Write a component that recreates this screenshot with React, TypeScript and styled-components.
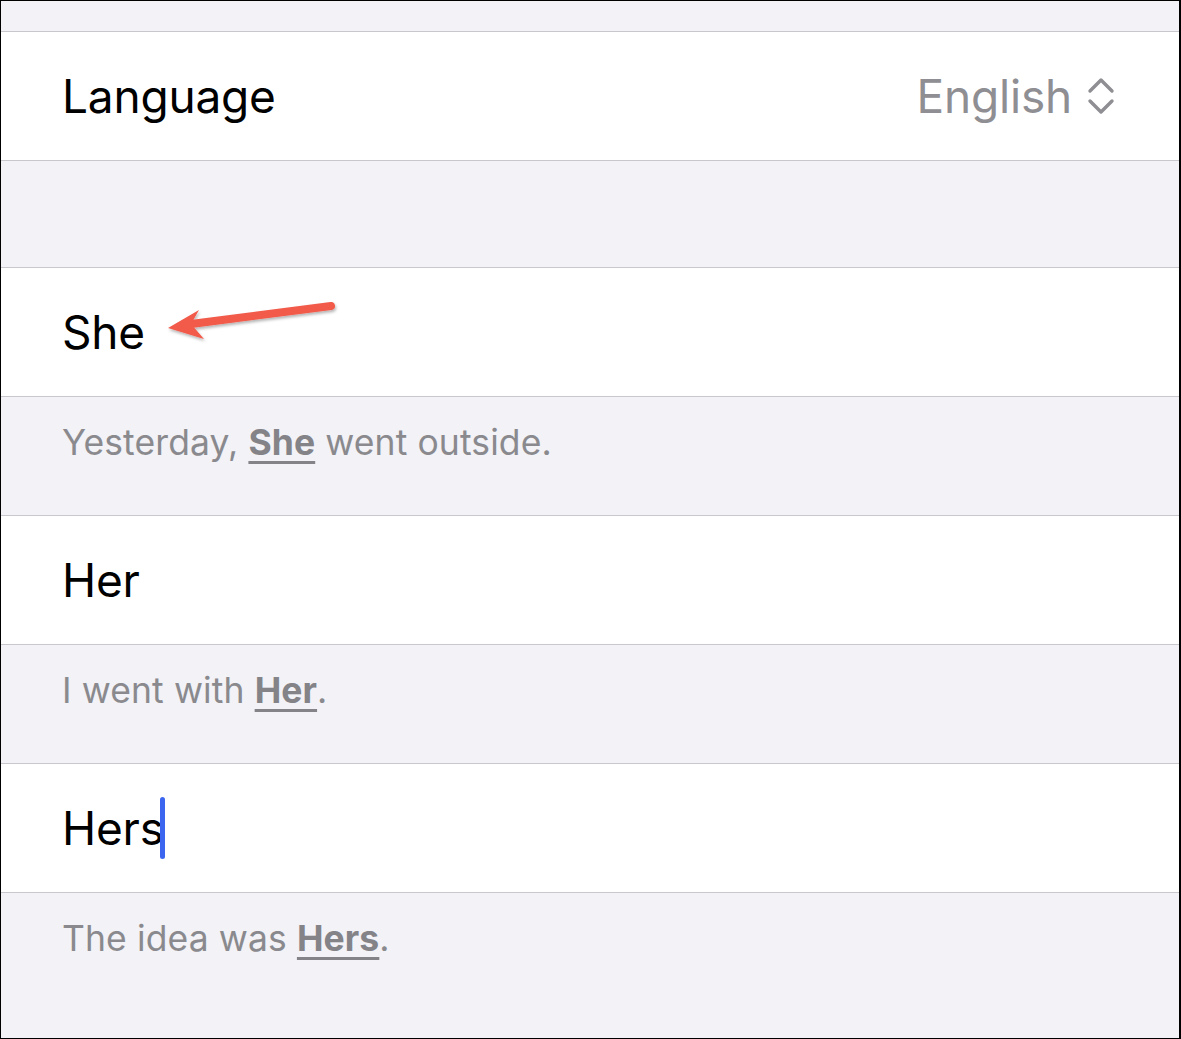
import React from "react";
import styled, { createGlobalStyle } from "styled-components";

const GlobalStyle = createGlobalStyle`
  html, body {
    margin: 0;
    padding: 0;
    background: #ffffff;
  }
  body {
    font-family: Inter, "Liberation Sans", Arial, sans-serif;
    -webkit-font-smoothing: antialiased;
  }
`;

const Screen = styled.div`
  box-sizing: border-box;
  width: 1181px;
  height: 1039px;
  border: 1px solid #000;
  border-right-width: 2px;
  background: #f2f2f7;
  display: flex;
  flex-direction: column;
  overflow: hidden;
`;

const Spacer = styled.div<{ $h: number }>`
  height: ${(p) => p.$h}px;
  flex-shrink: 0;
`;

const Row = styled.div`
  position: relative;
  box-sizing: border-box;
  height: 130px;
  flex-shrink: 0;
  background: #fff;
  border-top: 1px solid #c8c7cc;
  border-bottom: 1px solid #c8c7cc;
  display: flex;
  align-items: center;
  justify-content: space-between;
  padding: 0 64px 0 61px;
`;

const Label = styled.span`
  font-size: 46px;
  color: #000;
  letter-spacing: -0.2px;
  display: inline-flex;
  align-items: center;
`;

const Value = styled.span`
  display: flex;
  align-items: center;
  gap: 15px;
  font-size: 46px;
  color: #8e8e93;
  letter-spacing: -0.2px;
`;

const Caption = styled.div<{ $h: number }>`
  box-sizing: border-box;
  height: ${(p) => p.$h}px;
  flex-shrink: 0;
  padding: 22px 61px 0;
  font-size: 35.5px;
  line-height: 48px;
  color: #8a8a8e;
  letter-spacing: 0.1px;
`;

const Example = styled.b`
  font-weight: 700;
  color: #838388;
  text-decoration: underline;
  text-decoration-thickness: 3px;
  text-underline-offset: 6px;
`;

const Cursor = styled.span`
  display: inline-block;
  width: 5px;
  height: 62px;
  border-radius: 3px;
  background: #3c66f0;
  margin-left: -4px;
`;

const Arrow = styled.svg`
  position: absolute;
  left: 160px;
  top: 28px;
  overflow: visible;
`;

function Chevrons() {
  return (
    <svg width="28" height="40" viewBox="0 0 28 40" fill="none">
      <path d="M3 15 L14 4 L25 15" stroke="#8e8e93" strokeWidth="3.4" strokeLinecap="round" strokeLinejoin="round" />
      <path d="M3 25 L14 36 L25 25" stroke="#8e8e93" strokeWidth="3.4" strokeLinecap="round" strokeLinejoin="round" />
    </svg>
  );
}

export default function App() {
  return (
    <>
      <GlobalStyle />
      <Screen>
        <Spacer $h={30} />
        <Row>
          <Label>Language</Label>
          <Value>
            English
            <Chevrons />
          </Value>
        </Row>
        <Spacer $h={106} />
        <Row>
          <Label>She</Label>
          <Arrow width="180" height="50" viewBox="0 0 180 50">
            <defs>
              <filter id="sh" x="-10%" y="-30%" width="120%" height="160%">
                <feDropShadow dx="1" dy="2" stdDeviation="1.5" floodOpacity="0.3" />
              </filter>
            </defs>
            <g filter="url(#sh)">
              <path d="M170 10 L30 28" stroke="#f25a4a" strokeWidth="8" strokeLinecap="round" />
              <path d="M7 32 L38 14 L30 28 L43 43 Z" fill="#f25a4a" strokeLinejoin="round" />
            </g>
          </Arrow>
        </Row>
        <Caption $h={118}>
          Yesterday, <Example>She</Example> went outside.
        </Caption>
        <Row>
          <Label>Her</Label>
        </Row>
        <Caption $h={118}>
          I went with <Example>Her</Example>.
        </Caption>
        <Row>
          <Label>
            Hers
            <Cursor />
          </Label>
        </Row>
        <Caption $h={145}>
          The idea was <Example>Hers</Example>.
        </Caption>
      </Screen>
    </>
  );
}
